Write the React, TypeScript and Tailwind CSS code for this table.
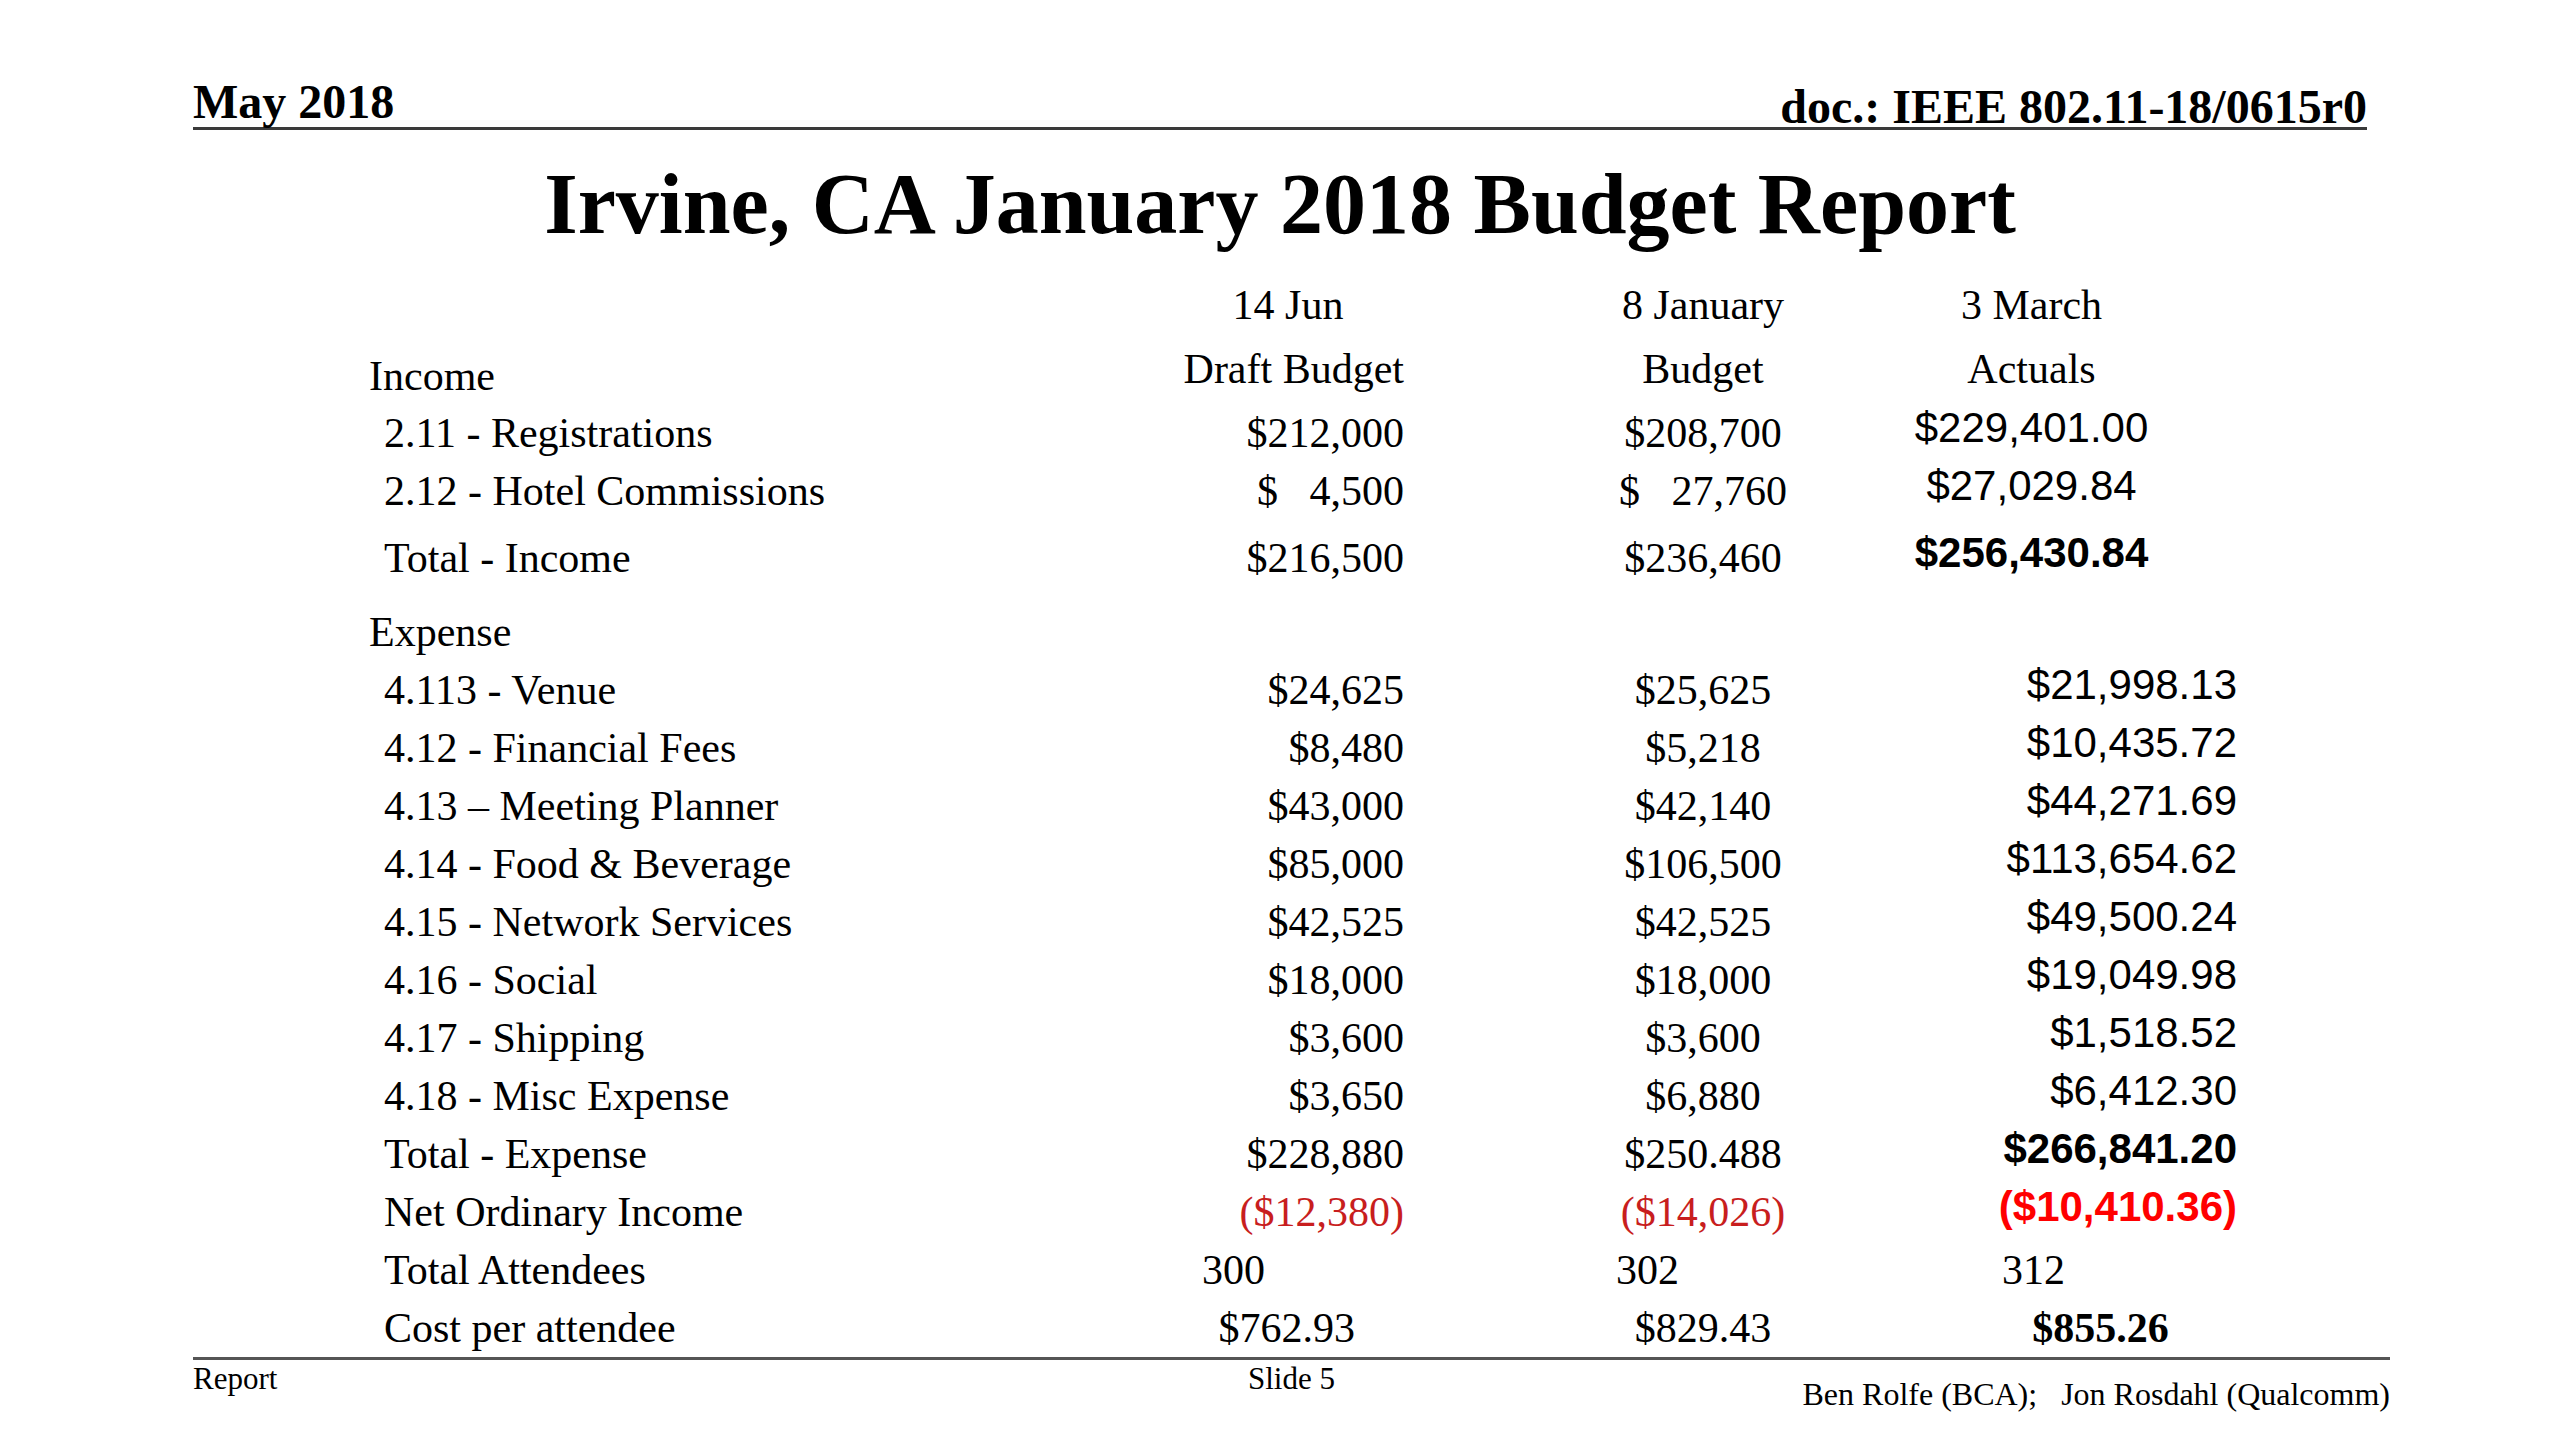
import type { ReactNode } from "react"

const sans = "font-['Liberation_Sans',Arial,sans-serif]"

interface RowProps {
  label: ReactNode
  c1?: ReactNode
  c2?: ReactNode
  c3?: ReactNode
  labelClass?: string
  c1Class?: string
  c2Class?: string
  c3Class?: string
  className?: string
}

function Row({
  label,
  c1,
  c2,
  c3,
  labelClass = "pl-[15px]",
  c1Class = "text-right",
  c2Class = "pl-[176px] text-center",
  c3Class = "text-right",
  className = "",
}: RowProps) {
  return (
    <div className={`grid h-[58px] grid-cols-[731px_304px_422px_411px] whitespace-pre leading-[58px] ${className}`}>
      <div className={labelClass}>{label}</div>
      <div className={c1Class}>{c1}</div>
      <div className={c2Class}>{c2}</div>
      <div className={c3Class}>{c3}</div>
    </div>
  )
}

// actuals column is set in Arial, sits a bit higher than the Times rows
const incomeActual = `${sans} text-center -mt-[5px]`
const expenseActual = `${sans} text-right -mt-[5px]`

const expenses: [string, string, string, string][] = [
  ["4.113 - Venue", "$24,625", "$25,625", "$21,998.13"],
  ["4.12 - Financial Fees", "$8,480", "$5,218", "$10,435.72"],
  ["4.13 \u2013 Meeting Planner", "$43,000", "$42,140", "$44,271.69"],
  ["4.14 - Food & Beverage", "$85,000", "$106,500", "$113,654.62"],
  ["4.15 - Network Services", "$42,525", "$42,525", "$49,500.24"],
  ["4.16 - Social", "$18,000", "$18,000", "$19,049.98"],
  ["4.17 - Shipping", "$3,600", "$3,600", "$1,518.52"],
  ["4.18 - Misc Expense", "$3,650", "$6,880", "$6,412.30"],
]

export default function App() {
  return (
    <div className="h-[1440px] w-[2560px] overflow-hidden bg-white font-['Liberation_Serif','Times_New_Roman',serif] text-black">
      {/* Header */}
      <div className="ml-[193px] w-[2174px] pt-[78px]">
        <div className="flex h-[48px] items-start justify-between text-[48px] font-bold leading-[48px]">
          <span>May 2018</span>
          <span className="pt-[5px]">doc.: IEEE 802.11-18/0615r0</span>
        </div>
        <div className="mt-[1px] h-[3px] bg-[#3a3a3a]" />
      </div>

      {/* Title */}
      <h1 className="mt-[31px] text-center text-[86px] font-bold leading-[86px]">
        Irvine, CA January 2018 Budget Report
      </h1>

      {/* Budget table */}
      <div className="ml-[369px] mt-[29px] text-[42px]">
        <Row
          label=""
          c1="14 Jun"
          c1Class="pl-[72px] text-center"
          c2="8 January"
          c3="3 March"
          c3Class="text-center"
        />
        <Row
          className="mt-[6px]"
          label="Income"
          labelClass="pt-[7px]"
          c1="Draft Budget"
          c2="Budget"
          c3="Actuals"
          c3Class="text-center"
        />
        <Row
          className="mt-[6px]"
          label="2.11 - Registrations"
          c1="$212,000"
          c2="$208,700"
          c3="$229,401.00"
          c3Class={incomeActual}
        />
        <Row
          label="2.12 - Hotel Commissions"
          c1="$   4,500"
          c2="$   27,760"
          c3="$27,029.84"
          c3Class={incomeActual}
        />
        <Row
          className="mt-[9px]"
          label="Total - Income"
          c1="$216,500"
          c2="$236,460"
          c3="$256,430.84"
          c3Class={`${incomeActual} font-bold`}
        />
        <Row className="mt-[16px]" label="Expense" labelClass="" />
        {expenses.map(([label, draft, budget, actual]) => (
          <Row key={label} label={label} c1={draft} c2={budget} c3={actual} c3Class={expenseActual} />
        ))}
        <Row
          label="Total - Expense"
          c1="$228,880"
          c2="$250.488"
          c3="$266,841.20"
          c3Class={`${expenseActual} font-bold`}
        />
        <Row
          label="Net Ordinary Income"
          c1={<span className="text-[#c81e1e]">($12,380)</span>}
          c2={<span className="text-[#c81e1e]">($14,026)</span>}
          c3={<span className="text-[#ff0000]">($10,410.36)</span>}
          c3Class={`${expenseActual} font-bold`}
        />
        <Row
          label="Total Attendees"
          c1="300"
          c1Class="pl-[102px] text-left"
          c2="302"
          c2Class="pl-[212px] text-left"
          c3="312"
          c3Class="pl-[176px] text-left"
        />
        <Row
          label="Cost per attendee"
          c1="$762.93"
          c1Class="pr-[49px] text-right"
          c2="$829.43"
          c3="$855.26"
          c3Class="pl-[138px] text-center font-bold"
        />
      </div>

      {/* Footer */}
      <div className="ml-[193px] w-[2197px]">
        <div className="h-[3px] bg-[#555555]" />
        <div className="mt-[3px] grid grid-cols-[1fr_auto_1fr] whitespace-pre text-[31px] leading-[31px]">
          <span>Report</span>
          <span>Slide 5</span>
          <span className="pt-[16px] text-right text-[32px]">Ben Rolfe (BCA);   Jon Rosdahl (Qualcomm)</span>
        </div>
      </div>
    </div>
  )
}
